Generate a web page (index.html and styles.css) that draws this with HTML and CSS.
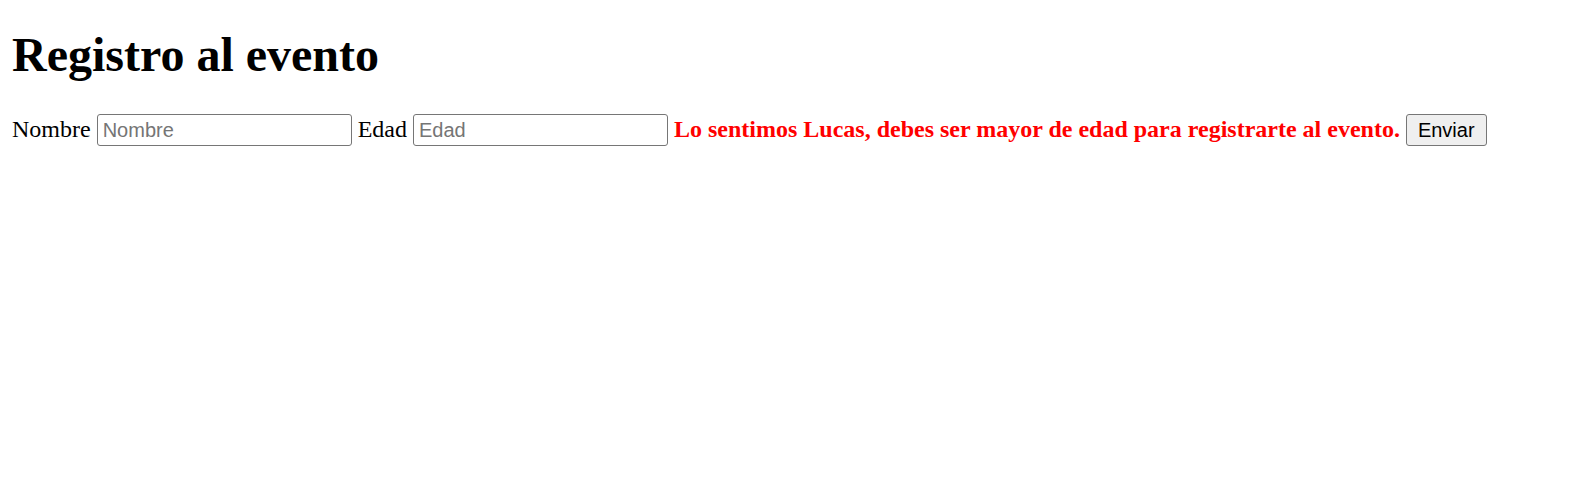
FILE: index.html
```html
<!DOCTYPE html>
<html lang="es">
<head>
<meta charset="utf-8">
<title>Registro al evento</title>
<link rel="stylesheet" href="styles.css">
</head>
<body>
<h1 class="title">Registro al evento</h1>
<form class="form">
<label class="label" for="nombre">Nombre</label> <input class="field" id="nombre" type="text" placeholder="Nombre"> <label class="label" for="edad">Edad</label> <input class="field" id="edad" type="text" placeholder="Edad"> <span class="error">Lo sentimos Lucas, debes ser mayor de edad para registrarte al evento.</span> <button class="submit" type="button">Enviar</button>
</form>
</body>
</html>
```
FILE: styles.css
```css
html, body {
  background: #ffffff;
}
body {
  margin: 12px;
  font-family: "Liberation Serif", "Times New Roman", serif;
  font-size: 24px;
  color: #000000;
}
.title {
  font-size: 48px;
  font-weight: bold;
  margin: 15px 0 32px;
}
.form {
  margin: 0;
}
.field {
  box-sizing: border-box;
  width: 255px;
  height: 32px;
  padding: 1px 5px;
  border: 1px solid #767676;
  border-radius: 3px;
  font-family: "Liberation Sans", Arial, sans-serif;
  font-size: 20px;
  color: #000000;
  background: #ffffff;
  margin: 0;
}
.field::placeholder {
  color: #757575;
}
.error {
  color: #ff0000;
  font-weight: bold;
}
.submit {
  box-sizing: border-box;
  height: 32px;
  padding: 1px 11px;
  border: 1px solid #767676;
  border-radius: 3px;
  background: #efefef;
  font-family: "Liberation Sans", Arial, sans-serif;
  font-size: 20px;
  color: #000000;
  margin: 0;
}
```
